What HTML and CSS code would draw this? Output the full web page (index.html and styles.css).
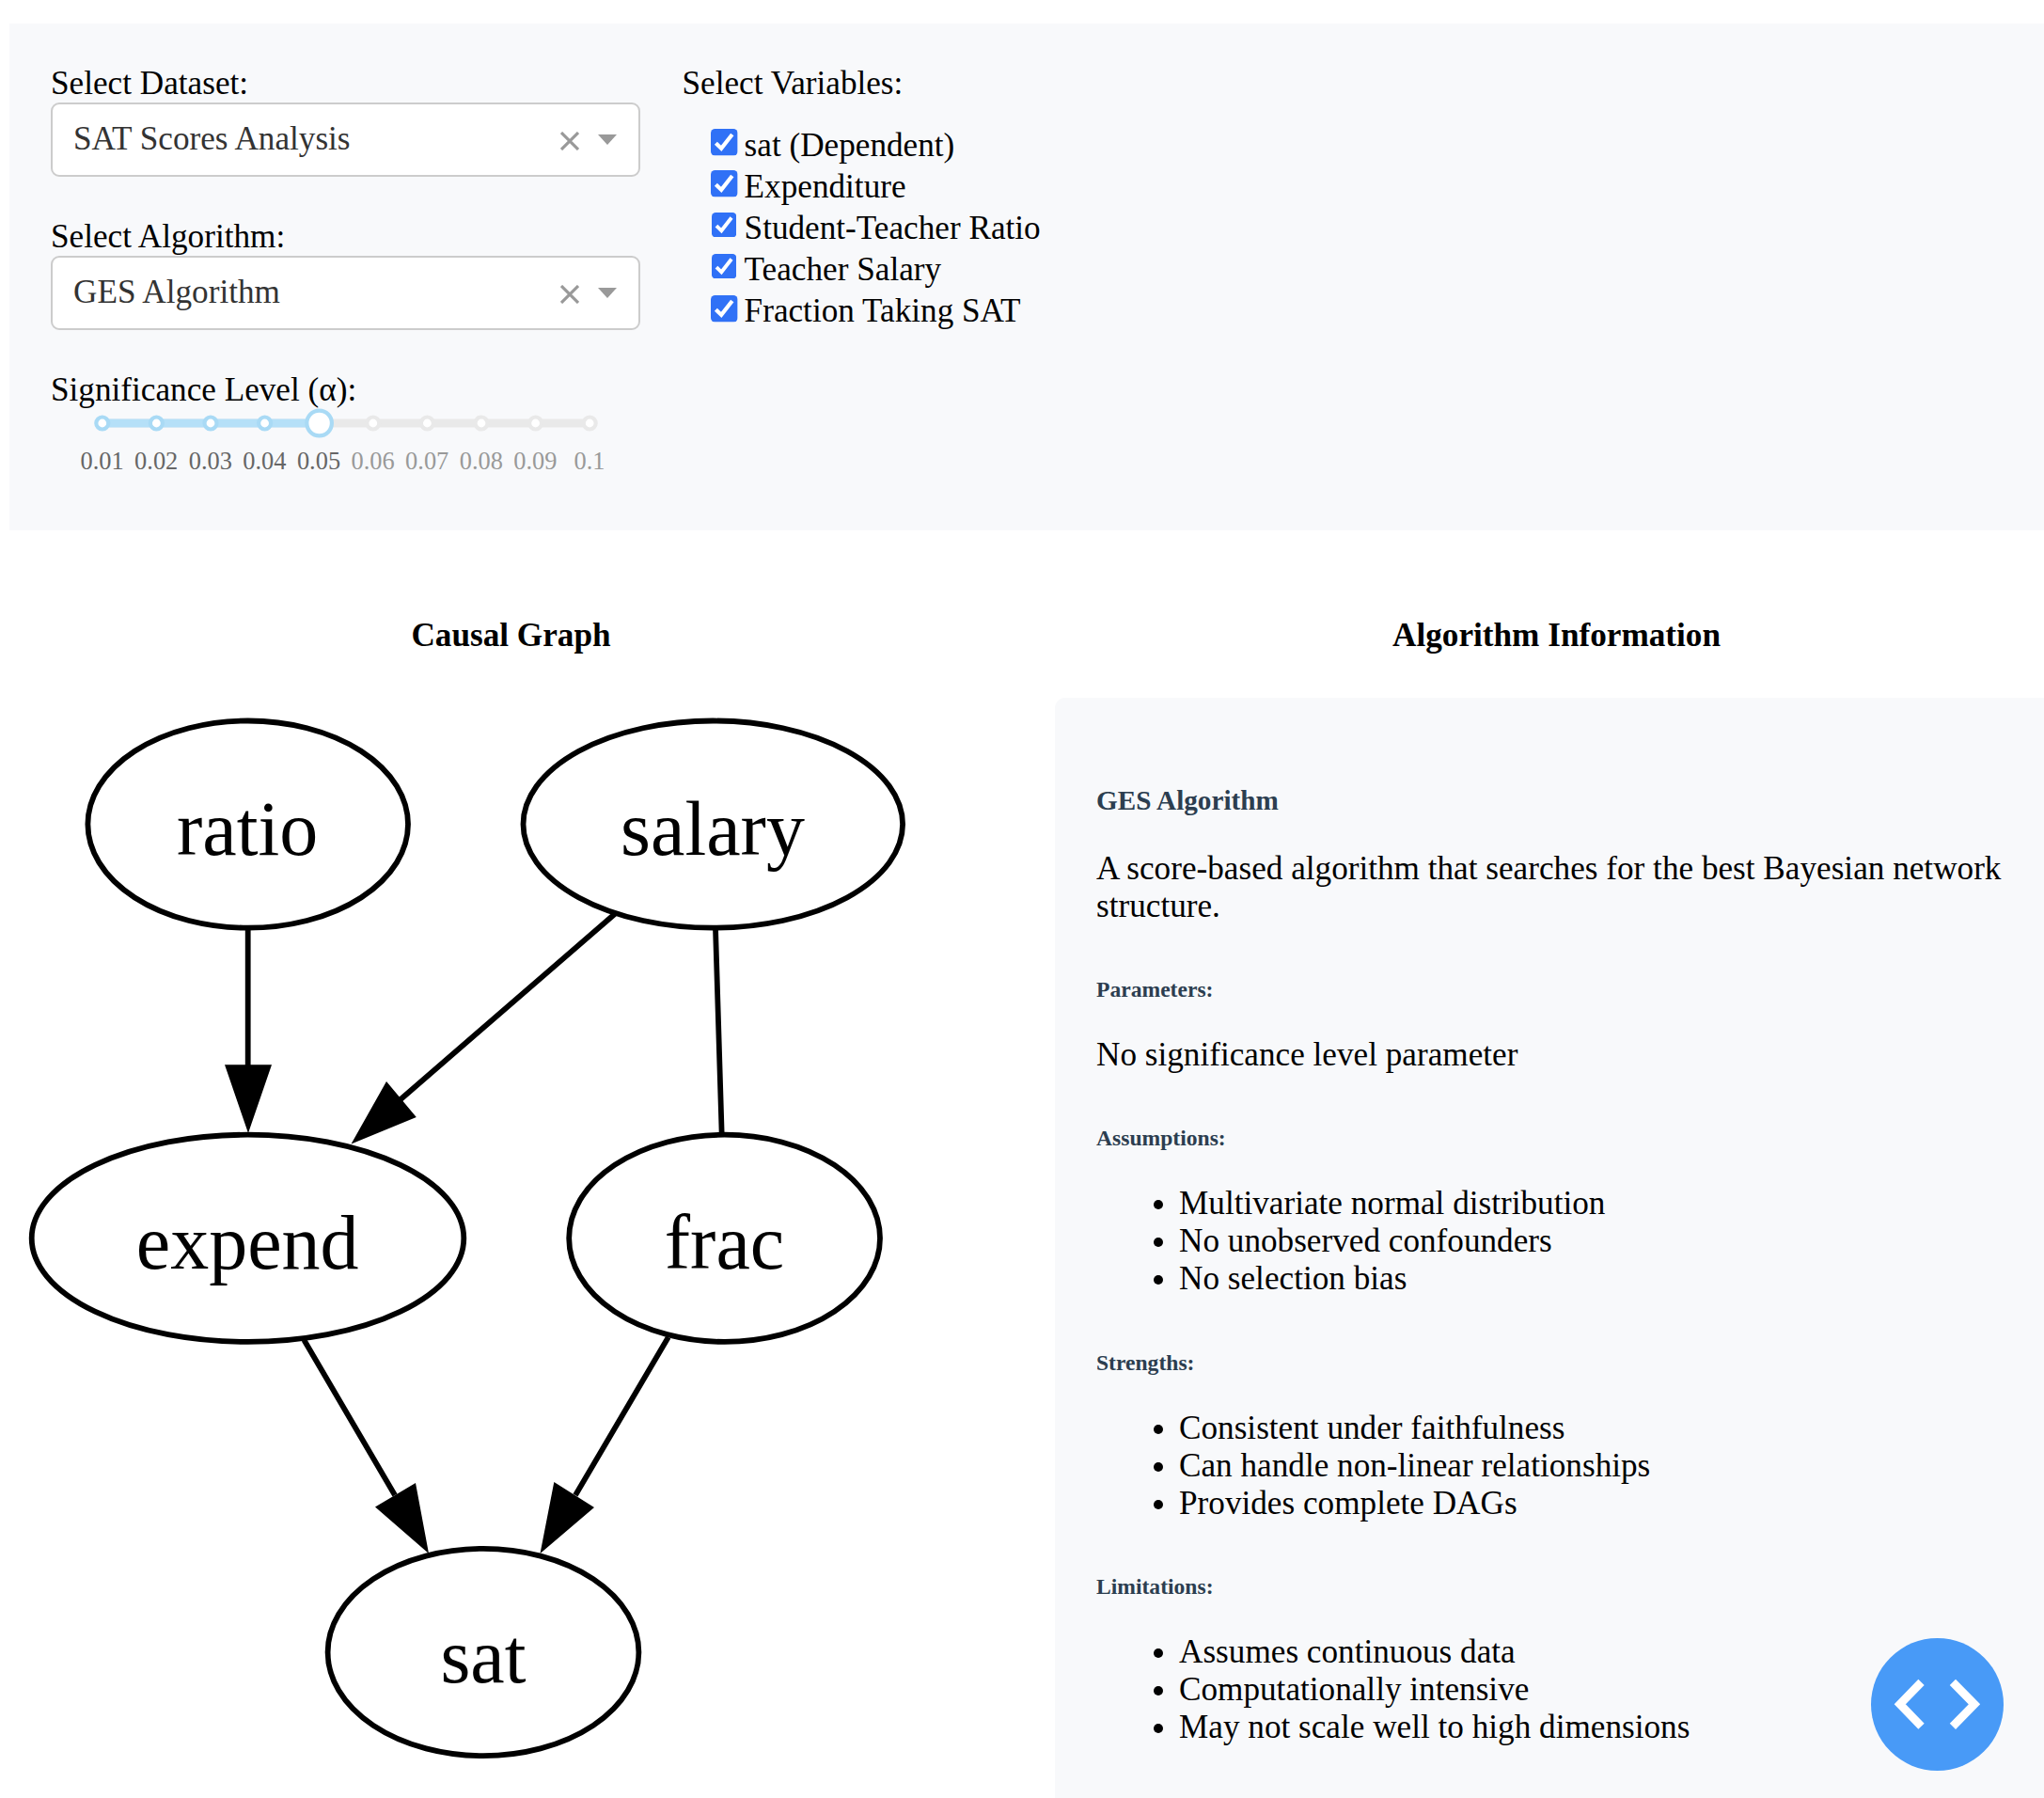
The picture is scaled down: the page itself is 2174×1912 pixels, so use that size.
FILE: index.html
```html
<!DOCTYPE html>
<html lang="en">
<head>
<meta charset="utf-8">
<title>Causal Graph</title>
<link rel="stylesheet" href="styles.css">
</head>
<body>
<svg class="defs" width="0" height="0">
  <symbol id="check" viewBox="0 0 28.6 28.6">
    <rect width="28.6" height="28.6" rx="4.6" fill="#3071f6"/>
    <path d="M5.4 15.2 11.2 20.9 22.8 6" fill="none" stroke="#fff" stroke-width="4.2"/>
  </symbol>
  <symbol id="clear" viewBox="0 0 20 20">
    <path d="M1 1 19 19M19 1 1 19" fill="none" stroke="#999" stroke-width="3.1"/>
  </symbol>
</svg>

<section class="controls">
  <div class="settings">
    <div class="field">
      <label>Select Dataset:</label>
      <div class="select"><span class="value">SAT Scores Analysis</span><svg class="clear"><use href="#clear"/></svg><span class="arrow"></span></div>
    </div>
    <div class="field">
      <label>Select Algorithm:</label>
      <div class="select"><span class="value">GES Algorithm</span><svg class="clear"><use href="#clear"/></svg><span class="arrow"></span></div>
    </div>
    <div class="field">
      <label>Significance Level (α):</label>
      <div class="slider">
        <svg class="rail" viewBox="0 0 576 32">
          <path d="M29 16H547" stroke="#e9e9e9" stroke-width="9"/>
          <path d="M29 16H259" stroke="#b5e0f8" stroke-width="9"/>
          <g fill="#fff" stroke-width="4.2">
            <g stroke="#a9daf5">
              <circle cx="28.8" cy="16" r="6.5"/><circle cx="86.4" cy="16" r="6.5"/><circle cx="144" cy="16" r="6.5"/><circle cx="201.6" cy="16" r="6.5"/>
              <circle cx="259.6" cy="16" r="13.3"/>
            </g>
            <g stroke="#e9e9e9">
              <circle cx="316.8" cy="16" r="6.5"/><circle cx="374.4" cy="16" r="6.5"/><circle cx="432" cy="16" r="6.5"/><circle cx="489.6" cy="16" r="6.5"/><circle cx="547.2" cy="16" r="6.5"/>
            </g>
          </g>
        </svg>
        <div class="marks">
          <span class="on">0.01</span><span class="on">0.02</span><span class="on">0.03</span><span class="on">0.04</span><span class="on">0.05</span><span>0.06</span><span>0.07</span><span>0.08</span><span>0.09</span><span>0.1</span>
        </div>
      </div>
    </div>
  </div>
  <div class="variables">
    <label>Select Variables:</label>
    <div class="options">
      <div class="option"><svg class="box"><use href="#check"/></svg>sat (Dependent)</div>
      <div class="option"><svg class="box"><use href="#check"/></svg>Expenditure</div>
      <div class="option"><svg class="box small"><use href="#check"/></svg>Student-Teacher Ratio</div>
      <div class="option"><svg class="box small"><use href="#check"/></svg>Teacher Salary</div>
      <div class="option"><svg class="box last"><use href="#check"/></svg>Fraction Taking SAT</div>
    </div>
  </div>
</section>

<main class="results">
  <section class="column">
    <h4 class="title">Causal Graph</h4>
    <svg class="graph" viewBox="10 742 1067 1170">
      <g fill="none" stroke="#000" stroke-width="5.8">
        <ellipse cx="263.7" cy="876.6" rx="170.3" ry="110.1"/>
        <ellipse cx="758.3" cy="876.6" rx="201.8" ry="110.1"/>
        <ellipse cx="263.5" cy="1316.8" rx="229.8" ry="110.1"/>
        <ellipse cx="770.6" cy="1316.8" rx="165.4" ry="110.1"/>
        <ellipse cx="514" cy="1757" rx="165.4" ry="110.1"/>
        <path d="M263.7 987V1135M653.8 972 425 1170M761 987 767.7 1207M323.4 1425 420 1590M710.8 1422 612 1590"/>
      </g>
      <path d="M239 1132.3H289L264 1205ZM411 1150 442.8 1188 373.5 1216.5ZM399 1602.5 442 1577 456 1652ZM589.3 1576 632 1603 574.5 1652Z"/>
      <g class="node-text">
        <text x="263.2" y="908.5">ratio</text>
        <text x="758" y="908.5">salary</text>
        <text x="263.2" y="1348.5">expend</text>
        <text x="770.5" y="1348.5">frac</text>
        <text x="514" y="1789">sat</text>
      </g>
    </svg>
  </section>
  <section class="column">
    <h4 class="title">Algorithm Information</h4>
    <div class="info">
      <h5 class="name">GES Algorithm</h5>
      <p>A score-based algorithm that searches for the best Bayesian network structure.</p>
      <h6>Parameters:</h6>
      <p>No significance level parameter</p>
      <h6>Assumptions:</h6>
      <ul>
        <li>Multivariate normal distribution</li>
        <li>No unobserved confounders</li>
        <li>No selection bias</li>
      </ul>
      <h6>Strengths:</h6>
      <ul>
        <li>Consistent under faithfulness</li>
        <li>Can handle non-linear relationships</li>
        <li>Provides complete DAGs</li>
      </ul>
      <h6>Limitations:</h6>
      <ul>
        <li>Assumes continuous data</li>
        <li>Computationally intensive</li>
        <li>May not scale well to high dimensions</li>
      </ul>
    </div>
  </section>
</main>

<svg class="debug" viewBox="0 0 141 141">
  <circle cx="70.5" cy="70.5" r="70.5" fill="#489af7"/>
  <path d="M53.5 46.9 30.8 70.3 53.5 93.8M86.9 46.9 110 70.3 86.9 93.8" fill="none" stroke="#fff" stroke-width="8.8"/>
</svg>
</body>
</html>
```
FILE: styles.css
```css
* { box-sizing: border-box; }

html, body { height: 1912px; overflow: hidden; }

body {
  margin: 0;
  padding: 25px 0 0 10px;
  background: #fff;
  color: #000;
  font: 35.2px/40px "Liberation Serif", "Times New Roman", serif;
}

h4, h5, h6, p, ul { margin: 0; }

.defs { position: absolute; }

.controls {
  display: flex;
  gap: 44px;
  width: 2180px;
  height: 539px;
  padding: 44px;
  background: #f8f9fb;
}

.settings { width: 627px; }
.field { height: 163px; }
label { display: block; }

.select {
  display: flex;
  align-items: center;
  height: 79px;
  padding: 0 23px 0 22px;
  border: 2px solid #ccc;
  border-radius: 9px;
  background: #fff;
  color: #333;
}
.value { flex: 1; padding-bottom: 1px; }
.clear { width: 20px; height: 20px; margin: 2px 20px 0 0; }
.arrow {
  border: 10.5px solid transparent;
  border-top: 11px solid #999;
  border-bottom: 0;
}

.slider { width: 576px; margin: -1px 0 0 25.8px; }
.rail { display: block; width: 576px; height: 32px; }
.marks {
  display: grid;
  grid-template-columns: repeat(10, 1fr);
  padding-top: 9px;
  font-size: 26.4px;
  line-height: 30px;
  text-align: center;
  color: #999;
}
.on { color: #666; }

.variables { padding-left: 0.5px; }
.options { padding: 23px 0 0 30.5px; }
.option { display: flex; height: 44px; line-height: 46px; }
.box { width: 28.6px; height: 28.6px; margin: 5px 7px 0 0; }
.small { width: 26.4px; height: 26.4px; margin: 6px 8.2px 0 1px; }
.last { margin-top: 6px; }

.results { display: flex; gap: 45px; padding-top: 92px; }
.column { flex: none; width: 1067px; }
.title { font-size: 35.2px; text-align: center; }
.graph { display: block; width: 1067px; height: 1170px; margin-top: 46px; }
.node-text { font-size: 82px; text-anchor: middle; }

.info {
  height: 1170px;
  margin-top: 46px;
  padding: 93px 44px 0;
  border-radius: 11px 11px 0 0;
  background: #f8f9fb;
}
.name, h6 { color: #2c3e50; }
.name { margin-bottom: 35.5px; font-size: 29.2px; line-height: 33px; }
h6 { margin: 55.4px 0 36px; font-size: 23.6px; line-height: 27px; }
ul { padding-left: 88px; }

/* Floating developer tools toggle */
.debug { position: fixed; left: 1990px; top: 1742px; width: 141px; height: 141px; }
```
